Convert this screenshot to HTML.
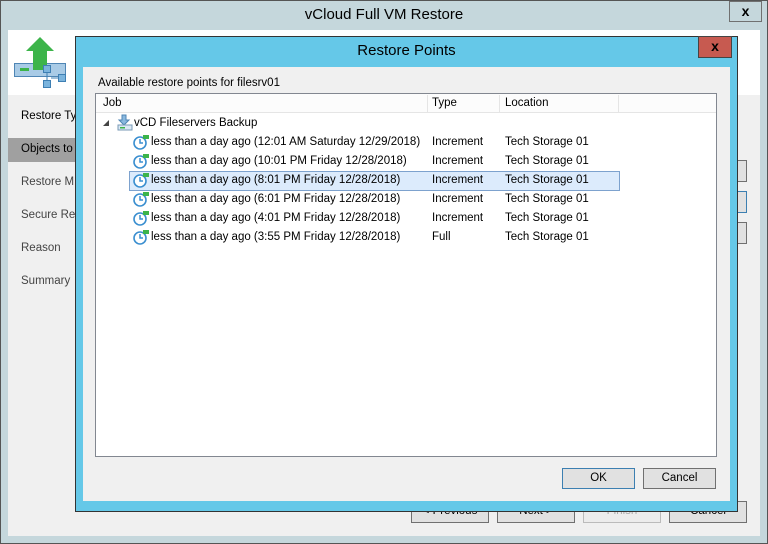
<!DOCTYPE html>
<html><head><style>
*{margin:0;padding:0;box-sizing:border-box}
body{width:768px;height:544px;position:relative;overflow:hidden;background:#c5d7dc;font-family:"Liberation Sans",sans-serif;font-size:11.5px;color:#000}
.a{position:absolute}
.btn{position:absolute;background:#e1e1e1;border:1px solid #707070;text-align:center;line-height:19px;font-size:11.5px}
.row{position:absolute;left:151px;height:19px;line-height:19px;white-space:nowrap}
.clk{position:absolute;left:133px;width:16px;height:16px}
</style></head><body>
<div class="a" style="left:0;top:0;width:768px;height:544px;border:1px solid #555"></div>
<div class="a" style="left:0;top:6px;width:768px;text-align:center;font-size:15px">vCloud Full VM Restore</div>
<div class="btn" style="left:729px;top:1px;width:33px;height:21px;background:#c5d7dc;font-weight:bold;font-size:14px;line-height:18px">x</div>
<div class="a" style="left:8px;top:30px;width:752px;height:506px;background:#f0f0f0"></div>
<div class="a" style="left:8px;top:30px;width:752px;height:65px;background:#fff"></div>
<svg class="a" style="left:14px;top:36px" width="54" height="54">
<rect x="0.5" y="27.5" width="51" height="13" fill="#a9cbe6" stroke="#4f86b5"/>
<rect x="6" y="32" width="9" height="3" fill="#3cb44a"/>
<path d="M19 34V15h-7L26 1l14 14h-7v19z" fill="#3cb44a"/>
<rect x="29.5" y="29.5" width="7" height="7" fill="#7bb4dd" stroke="#3e7fb3"/><rect x="44.5" y="38.5" width="7" height="7" fill="#7bb4dd" stroke="#3e7fb3"/><rect x="29.5" y="44.5" width="7" height="7" fill="#7bb4dd" stroke="#3e7fb3"/>
<path d="M33 37v7M37 42h7" stroke="#3e7fb3"/>
</svg>
<div class="a" style="left:21px;top:110px">Restore Ty</div>
<div class="a" style="left:8px;top:138px;width:70px;height:24px;background:#a0a0a0"></div>
<div class="a" style="left:21px;top:143px">Objects to</div>
<div class="a" style="left:21px;top:176px;color:#444">Restore M</div>
<div class="a" style="left:21px;top:209px;color:#444">Secure Res</div>
<div class="a" style="left:21px;top:242px;color:#444">Reason</div>
<div class="a" style="left:21px;top:275px;color:#444">Summary</div>
<div class="btn" style="left:730px;top:160px;width:17px;height:22px"></div>
<div class="btn" style="left:730px;top:191px;width:17px;height:22px;border-color:#3c7fb1"></div>
<div class="btn" style="left:730px;top:222px;width:17px;height:22px"></div>
<div class="btn" style="left:411px;top:501px;width:78px;height:22px">&lt; Previous</div>
<div class="btn" style="left:497px;top:501px;width:78px;height:22px">Next &gt;</div>
<div class="btn" style="left:583px;top:501px;width:78px;height:22px;color:#aaa;border-color:#bbb;background:#ececec">Finish</div>
<div class="btn" style="left:669px;top:501px;width:78px;height:22px">Cancel</div>
<!-- dialog -->
<div class="a" style="left:75px;top:36px;width:663px;height:476px;background:#65c8e8;border:1px solid #333"></div>
<div class="a" style="left:75px;top:42px;width:663px;text-align:center;font-size:15px">Restore Points</div>
<div class="a" style="left:698px;top:36px;width:34px;height:22px;background:#c75a50;border:1px solid #444;text-align:center;font-weight:bold;font-size:14px;line-height:18px">x</div>
<div class="a" style="left:83px;top:67px;width:647px;height:434px;background:#f0f0f0"></div>
<div class="a" style="left:98px;top:77px">Available restore points for filesrv01</div>
<div class="a" style="left:95px;top:93px;width:622px;height:364px;background:#fff;border:1px solid #828790"></div>
<div class="a" style="left:96px;top:94px;width:620px;height:19px;background:#fcfcfc;border-bottom:1px solid #e5e5e5"></div>
<div class="a" style="left:427px;top:95px;width:1px;height:18px;background:#e5e5e5"></div>
<div class="a" style="left:499px;top:95px;width:1px;height:18px;background:#e5e5e5"></div>
<div class="a" style="left:618px;top:95px;width:1px;height:18px;background:#e5e5e5"></div>
<div class="a" style="left:103px;top:97px">Job</div>
<div class="a" style="left:432px;top:97px">Type</div>
<div class="a" style="left:505px;top:97px">Location</div>
<div class="a" style="left:103px;top:120px;width:0;height:0;border-left:6px solid transparent;border-bottom:6px solid #444"></div>
<svg class="a" style="left:116px;top:114px" width="18" height="18"><path d="M6 1h4v5h3l-5 5-5-5h3z" fill="#8ab8de" stroke="#4f86b5"/><rect x="2" y="11" width="14" height="5" fill="#dbe9f5" stroke="#7a9ab6"/><rect x="4" y="13" width="5" height="1.5" fill="#3cb44a"/></svg>
<div class="row" style="left:134px;top:114px">vCD Fileservers Backup</div>
<div class="a" style="left:129px;top:171px;width:491px;height:20px;background:#dcebfc;border:1px solid #7da2ce"></div>
<svg width="0" height="0" style="position:absolute"><defs><g id="c"><circle cx="7" cy="9" r="6" fill="#fff" stroke="#3b8fd0" stroke-width="1.6"/><path d="M7 5v4h3" stroke="#3b8fd0" stroke-width="1.5" fill="none"/><path d="M10 1h6v4h-6z" fill="#3cb44a"/></g></defs></svg>
<svg class="clk" style="top:134px"><use href="#c"/></svg>
<svg class="clk" style="top:153px"><use href="#c"/></svg>
<svg class="clk" style="top:172px"><use href="#c"/></svg>
<svg class="clk" style="top:191px"><use href="#c"/></svg>
<svg class="clk" style="top:210px"><use href="#c"/></svg>
<svg class="clk" style="top:229px"><use href="#c"/></svg>
<div class="row" style="top:133px">less than a day ago (12:01 AM Saturday 12/29/2018)</div>
<div class="row" style="top:152px">less than a day ago (10:01 PM Friday 12/28/2018)</div>
<div class="row" style="top:171px">less than a day ago (8:01 PM Friday 12/28/2018)</div>
<div class="row" style="top:190px">less than a day ago (6:01 PM Friday 12/28/2018)</div>
<div class="row" style="top:209px">less than a day ago (4:01 PM Friday 12/28/2018)</div>
<div class="row" style="top:228px">less than a day ago (3:55 PM Friday 12/28/2018)</div>
<div class="row" style="left:432px;top:133px">Increment</div><div class="row" style="left:505px;top:133px">Tech Storage 01</div>
<div class="row" style="left:432px;top:152px">Increment</div><div class="row" style="left:505px;top:152px">Tech Storage 01</div>
<div class="row" style="left:432px;top:171px">Increment</div><div class="row" style="left:505px;top:171px">Tech Storage 01</div>
<div class="row" style="left:432px;top:190px">Increment</div><div class="row" style="left:505px;top:190px">Tech Storage 01</div>
<div class="row" style="left:432px;top:209px">Increment</div><div class="row" style="left:505px;top:209px">Tech Storage 01</div>
<div class="row" style="left:432px;top:228px">Full</div><div class="row" style="left:505px;top:228px">Tech Storage 01</div>
<div class="btn" style="left:562px;top:468px;width:73px;height:21px;border-color:#3c7fb1">OK</div>
<div class="btn" style="left:643px;top:468px;width:73px;height:21px">Cancel</div>
</body></html>
